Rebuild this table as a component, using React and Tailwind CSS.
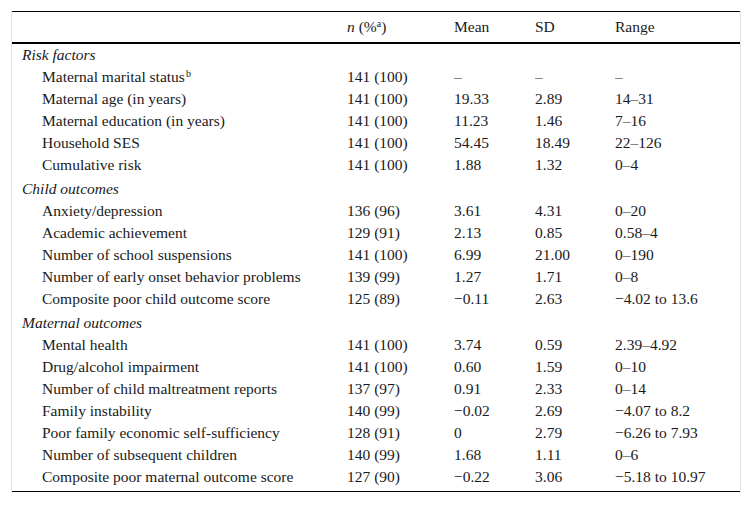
import React from 'react'

const sections = [
    {
        title: 'Risk factors',
        rows: [
            ['Maternal marital status', '141 (100)', '–', '–', '–', 'b'],
            ['Maternal age (in years)', '141 (100)', '19.33', '2.89', '14–31'],
            ['Maternal education (in years)', '141 (100)', '11.23', '1.46', '7–16'],
            ['Household SES', '141 (100)', '54.45', '18.49', '22–126'],
            ['Cumulative risk', '141 (100)', '1.88', '1.32', '0–4'],
        ],
    },
    {
        title: 'Child outcomes',
        rows: [
            ['Anxiety/depression', '136 (96)', '3.61', '4.31', '0–20'],
            ['Academic achievement', '129 (91)', '2.13', '0.85', '0.58–4'],
            ['Number of school suspensions', '141 (100)', '6.99', '21.00', '0–190'],
            ['Number of early onset behavior problems', '139 (99)', '1.27', '1.71', '0–8'],
            ['Composite poor child outcome score', '125 (89)', '−0.11', '2.63', '−4.02 to 13.6'],
        ],
    },
    {
        title: 'Maternal outcomes',
        rows: [
            ['Mental health', '141 (100)', '3.74', '0.59', '2.39–4.92'],
            ['Drug/alcohol impairment', '141 (100)', '0.60', '1.59', '0–10'],
            ['Number of child maltreatment reports', '137 (97)', '0.91', '2.33', '0–14'],
            ['Family instability', '140 (99)', '−0.02', '2.69', '−4.07 to 8.2'],
            ['Poor family economic self-sufficiency', '128 (91)', '0', '2.79', '−6.26 to 7.93'],
            ['Number of subsequent children', '140 (99)', '1.68', '1.11', '0–6'],
            ['Composite poor maternal outcome score', '127 (90)', '−0.22', '3.06', '−5.18 to 10.97'],
        ],
    },
]

const cols = 'grid grid-cols-[325px_107px_81px_80px_137px]'

const Row = ({ r }) => (
    <div className={`${cols} h-[22px] items-center`}>
        <div className="pl-[30px]">
            {r[0]}
            {r[5] && <sup className="text-[10px] ml-px">{r[5]}</sup>}
        </div>
        <div className="pl-[10px]">{r[1]}</div>
        <div className="pl-[10px]">{r[2]}</div>
        <div className="pl-[10px]">{r[3]}</div>
        <div className="pl-[10px]">{r[4]}</div>
    </div>
)

export default function App() {
    return (
        <div className="w-[752px] h-[505px] bg-white pt-[11px] pl-[11px] font-['Liberation_Serif',serif] text-[15.5px] leading-[22px] text-[#1a1a1a]">
            <div className="w-[730px] border-x border-[#e3e3e3]">
                <div className={`${cols} h-[33px] items-center border-t border-b-2 border-black`}>
                    <div></div>
                    <div className="pl-[10px]">
                        <i>n</i> (%<sup className="text-[10px]">a</sup>)
                    </div>
                    <div className="pl-[10px]">Mean</div>
                    <div className="pl-[10px]">SD</div>
                    <div className="pl-[10px]">Range</div>
                </div>
                {sections.map((s, i) => (
                    <div key={s.title}>
                        <div className={`h-[22px] flex items-center pl-[10px] italic ${i > 0 ? 'mt-[2px]' : ''}`}>
                            {s.title}
                        </div>
                        {s.rows.map(r => (
                            <Row key={r[0]} r={r} />
                        ))}
                    </div>
                ))}
                <div className="h-[4px] border-b border-black"></div>
            </div>
        </div>
    )
}
